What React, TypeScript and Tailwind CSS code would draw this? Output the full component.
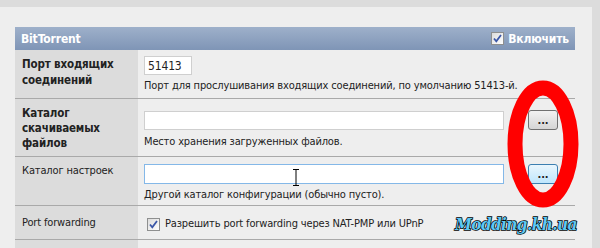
export default function App() {
  const font = "font-['DejaVu_Sans_Condensed','DejaVu_Sans',sans-serif]";
  return (
    <div className={`w-[600px] h-[248px] overflow-hidden bg-[#dcdcdc] pt-[7px] pr-[8px] ${font} text-[11px] tracking-[-0.15px] text-[#222]`}>
      <div className="relative h-full bg-[#eeeeee] pl-[15px] pr-[17px] pt-[20px]">
        {/* Header */}
        <div className="flex h-[23px] items-center justify-between bg-gradient-to-b from-[#9eb0ca] to-[#7f95b6] pl-[6px] pr-[6px] text-white font-bold text-[12px]">
          <span>BitTorrent</span>
          <label className="flex items-center gap-[4px]">
            <Check />
            <span>Включить</span>
          </label>
        </div>

        {/* Port */}
        <div className="flex h-[49px] border-b border-[#a9a9a9]">
          <div className="w-[123px] shrink-0 bg-[#dcdcdc] pl-[7px] pt-[6px] font-bold text-[11.5px] leading-[16px]">
            Порт входящих<br />соединений
          </div>
          <div className="flex flex-col pl-[6px] pt-[6px]">
            <input
              readOnly
              value="51413"
              className="h-[19px] w-[48px] border border-[#cfcfcf] bg-white px-[3px] text-[12px] outline-none"
            />
            <p className="mt-[3px] leading-[16px]">Порт для прослушивания входящих соединений, по умолчанию 51413-й.</p>
          </div>
        </div>

        {/* Download dir */}
        <div className="flex h-[58px] border-b border-[#a9a9a9]">
          <div className="w-[123px] shrink-0 bg-[#dcdcdc] pl-[7px] pt-[7px] font-bold text-[11.5px] leading-[15px]">
            Каталог<br />скачиваемых<br />файлов
          </div>
          <div className="flex flex-1 flex-col pl-[6px] pt-[11px]">
            <div className="flex items-center">
              <div className="h-[19px] w-[360px] border border-[#cfcfcf] bg-white" />
              <Btn />
            </div>
            <p className="mt-[4px] leading-[16px]">Место хранения загруженных файлов.</p>
          </div>
        </div>

        {/* Config dir */}
        <div className="flex h-[49px] border-b border-[#a9a9a9]">
          <div className="w-[123px] shrink-0 bg-[#dcdcdc] pl-[7px] pt-[6px] leading-[16px]">
            Каталог настроек
          </div>
          <div className="flex flex-1 flex-col pl-[6px] pt-[7px]">
            <div className="relative flex items-center">
              <div className="h-[20px] w-[360px] border border-[#84b8e8] bg-white" />
              <Btn hot />
              <svg className="absolute left-[148px] top-[5px]" width="8" height="17" viewBox="0 0 8 17">
                <path d="M1 0.5h6M1 16.5h6M4 0.5v16" stroke="#000" strokeWidth="1" fill="none" />
              </svg>
            </div>
            <p className="mt-[3px] leading-[16px]">Другой каталог конфигурации (обычно пусто).</p>
          </div>
        </div>

        {/* Port forwarding */}
        <div className="flex h-[34px] border-b border-[#a9a9a9]">
          <div className="w-[123px] shrink-0 bg-[#dcdcdc] pl-[7px] pt-[9px] leading-[16px]">
            Port forwarding
          </div>
          <label className="flex items-center gap-[5px] self-start pl-[9px] pt-[10px] leading-[16px]">
            <Check />
            <span>Разрешить port forwarding через NAT-PMP или UPnP</span>
          </label>
        </div>

        <div className="flex h-[20px]">
          <div className="w-[123px] shrink-0 bg-[#dcdcdc]" />
        </div>

        {/* red mark drawn over the screenshot */}
        <svg className="absolute left-[505px] top-[73px]" width="76" height="128" viewBox="0 0 76 128">
          <ellipse cx="38" cy="64" rx="28" ry="56" fill="none" stroke="#ff0000" strokeWidth="15" />
        </svg>

        <div className="absolute left-[455px] top-[205px] font-['DejaVu_Serif_Condensed','DejaVu_Serif',serif] text-[17px] font-bold italic tracking-[-0.6px] text-[#5cc8f4] [-webkit-text-stroke:1.5px_#000] [paint-order:stroke_fill]">
          Modding.kh.ua
        </div>
      </div>
    </div>
  );
}

function Check() {
  return (
    <span className="flex h-[13px] w-[13px] items-center justify-center border border-[#8e8f8f] bg-gradient-to-br from-[#dcdcdc] to-white">
      <svg width="9" height="9" viewBox="0 0 9 9">
        <path d="M1 4.5l2.3 2.8L8 1" stroke="#3b57a8" strokeWidth="1.8" fill="none" />
      </svg>
    </span>
  );
}

function Btn({ hot = false }: { hot?: boolean }) {
  return (
    <button
      className={`ml-[24px] flex h-[20px] w-[30px] items-center justify-center rounded-[3px] border text-[11px] font-bold leading-none ${
        hot
          ? "border-[#3c7fb1] bg-gradient-to-b from-[#eaf6fd] to-[#bee6fd]"
          : "border-[#707070] bg-gradient-to-b from-[#f2f2f2] to-[#d5d5d5]"
      }`}
    >
      ...
    </button>
  );
}
